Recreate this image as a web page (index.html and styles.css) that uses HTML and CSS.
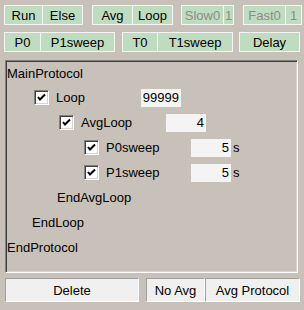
FILE: index.html
```html
<!DOCTYPE html>
<html>
<head>
    <meta charset="UTF-8">
    <title>Protocol</title>
    <link rel="stylesheet" href="styles.css">
</head>
<body>
    <!-- toolbar -->
    <div class="toolbar">
        <button class="tb w39">Run</button>
        <button class="tb w40 join">Else</button>
        <button class="tb w40 sep9">Avg</button>
        <button class="tb w40 join">Loop</button>
        <button class="tb w42 sep8 off">Slow0</button>
        <button class="tb w10 join off">1</button>
        <button class="tb w42 sep9 off">Fast0</button>
        <button class="tb w16 join off">1</button>
    </div>
    <div class="toolbar row2">
        <button class="tb w37">P0</button>
        <button class="tb w74 join">P1sweep</button>
        <button class="tb w36 sep7">T0</button>
        <button class="tb w75 join">T1sweep</button>
        <button class="tb w60 sep6">Delay</button>
    </div>

    <!-- protocol -->
    <div class="panel">
        <div class="step lvl0">MainProtocol</div>
        <div class="step lvl1">
            <span class="check"><svg width="9" height="9" viewBox="0 0 9 9"><path d="M1 4 L3 6.5 L8 1.5" fill="none" stroke="#000" stroke-width="2"/></svg></span>
            <span class="name">Loop</span>
            <span class="val wide">99999</span>
        </div>
        <div class="step lvl2">
            <span class="check"><svg width="9" height="9" viewBox="0 0 9 9"><path d="M1 4 L3 6.5 L8 1.5" fill="none" stroke="#000" stroke-width="2"/></svg></span>
            <span class="name">AvgLoop</span>
            <span class="val">4</span>
        </div>
        <div class="step lvl3">
            <span class="check"><svg width="9" height="9" viewBox="0 0 9 9"><path d="M1 4 L3 6.5 L8 1.5" fill="none" stroke="#000" stroke-width="2"/></svg></span>
            <span class="name">P0sweep</span>
            <span class="val">5</span>
            <span class="unit">s</span>
        </div>
        <div class="step lvl3">
            <span class="check"><svg width="9" height="9" viewBox="0 0 9 9"><path d="M1 4 L3 6.5 L8 1.5" fill="none" stroke="#000" stroke-width="2"/></svg></span>
            <span class="name">P1sweep</span>
            <span class="val">5</span>
            <span class="unit">s</span>
        </div>
        <div class="step lvl2">EndAvgLoop</div>
        <div class="step lvl1">EndLoop</div>
        <div class="step lvl0">EndProtocol</div>
    </div>

    <div class="actions">
        <button class="act del">Delete</button>
        <button class="act noavg">No Avg</button>
        <button class="act avgp">Avg Protocol</button>
    </div>
</body>
</html>
```

FILE: styles.css
```css
body {
    font-family: "Liberation Sans", Arial, sans-serif;
    font-size: 13px;
    margin: 0;
    padding: 5px 0 0 0;
    background: #c8c1b9;
    color: #000;
}
.toolbar {
    display: flex;
    padding-left: 4px;
    height: 20px;
}
.row2 {
    margin-top: 7px;
}
.tb {
    font: inherit;
    height: 20px;
    padding: 0;
    background: #c0dcc0;
    border: 1px solid #f4f4f4;
    color: #000;
}
.tb.off {
    color: #8c8c8c;
}
.join { margin-left: -1px; }
.sep6 { margin-left: 6px; }
.sep7 { margin-left: 7px; }
.sep8 { margin-left: 8px; }
.sep9 { margin-left: 9px; }
.w10 { width: 11px; }
.w16 { width: 17px; }
.w36 { width: 36px; }
.w37 { width: 37px; }
.w39 { width: 39px; }
.w40 { width: 41px; }
.w42 { width: 43px; }
.w60 { width: 61px; }
.w74 { width: 75px; }
.w75 { width: 76px; }

.panel {
    margin: 8px 0 0 5px;
    width: 290px;
    height: 211px;
    border: 1px solid;
    border-color: #808080 #ffffff #ffffff #808080;
    box-shadow: inset 1px 1px 0 #404040, inset -1px -1px 0 #d8d4cc;
    padding: 0 0 0 1px;
}
.step {
    display: flex;
    align-items: center;
    height: 25px;
    line-height: 25px;
    white-space: nowrap;
}
.panel .step:first-child {
    height: 24px;
}
.lvl0 { padding-left: 0; }
.lvl1 { padding-left: 25px; }
.lvl2 { padding-left: 50px; }
.lvl3 { padding-left: 75px; }
.check {
    box-sizing: border-box;
    width: 15px;
    height: 15px;
    margin-left: 2px;
    margin-right: 7px;
    background: #fff;
    border: 1px solid;
    border-color: #808080 #ffffff #ffffff #808080;
    box-shadow: inset 1px 1px 0 #404040, inset -1px -1px 0 #d8d4cc;
    display: flex;
    align-items: center;
    justify-content: center;
}
.name {
    width: 85px;
}
.val {
    box-sizing: border-box;
    width: 40px;
    height: 18px;
    line-height: 18px;
    background: #f4f4f4;
    text-align: right;
    padding-right: 2px;
}
.unit {
    margin-left: 2px;
}

.actions {
    display: flex;
    margin: 5px 0 0 5px;
}
.act {
    font: inherit;
    height: 24px;
    padding: 0;
    background: #f0f0f0;
    border: 1px solid;
    border-color: #a0a0a0 #ffffff #ffffff #a0a0a0;
    color: #000;
}
.del { width: 134px; }
.noavg { width: 59px; margin-left: 7px; }
.avgp { width: 95px; }
```
